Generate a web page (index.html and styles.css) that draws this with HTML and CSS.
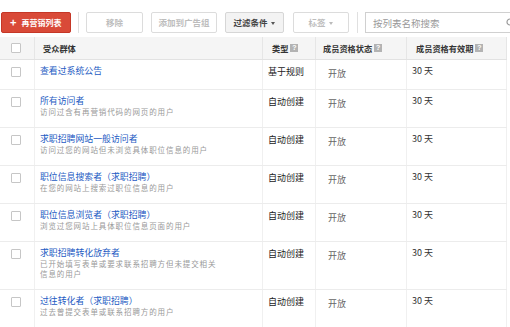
FILE: index.html
```html
<!DOCTYPE html>
<html lang="zh-CN">
<head>
<meta charset="utf-8">
<title>再营销列表</title>
<link rel="stylesheet" href="styles.css">
</head>
<body>
<div class="page">
  <div class="toolbar">
    <button class="btn btn-red"><span class="plus">+</span>再营销列表</button>
    <span class="sep"></span>
    <button class="btn btn-disabled w57">移除</button>
    <button class="btn btn-disabled w66">添加到广告组</button>
    <button class="btn btn-gray w59">过滤条件 <span class="caret"></span></button>
    <button class="btn btn-disabled w56">标签 <span class="caret light"></span></button>
    <span class="sep"></span>
    <div class="search">
      <span class="placeholder">按列表名称搜索</span>
      <svg class="search-icon" width="10" height="10" viewBox="0 0 10 10"><circle cx="4" cy="4" r="3" fill="none" stroke="#999" stroke-width="1.2"/><line x1="6.2" y1="6.2" x2="9" y2="9" stroke="#999" stroke-width="1.3"/></svg>
    </div>
  </div>

  <div class="grid">
    <div class="row head">
      <div class="cell c-check"><span class="cb"></span></div>
      <div class="cell h-name">受众群体</div>
      <div class="cell h-type">类型<span class="help">?</span></div>
      <div class="cell h-status">成员资格状态<span class="help">?</span></div>
      <div class="cell h-valid">成员资格有效期<span class="help">?</span></div>
    </div>

    <div class="row">
      <div class="cell c-check"><span class="cb"></span></div>
      <div class="cell c-name"><a class="name">查看过系统公告</a></div>
      <div class="cell c-type">基于规则</div>
      <div class="cell c-status">开放</div>
      <div class="cell c-valid">30 天</div>
    </div>

    <div class="row">
      <div class="cell c-check"><span class="cb"></span></div>
      <div class="cell c-name"><a class="name">所有访问者</a><div class="desc">访问过含有再营销代码的网页的用户</div></div>
      <div class="cell c-type">自动创建</div>
      <div class="cell c-status">开放</div>
      <div class="cell c-valid">30 天</div>
    </div>

    <div class="row">
      <div class="cell c-check"><span class="cb"></span></div>
      <div class="cell c-name"><a class="name">求职招聘网站一般访问者</a><div class="desc">访问过您的网站但未浏览具体职位信息的用户</div></div>
      <div class="cell c-type">自动创建</div>
      <div class="cell c-status">开放</div>
      <div class="cell c-valid">30 天</div>
    </div>

    <div class="row">
      <div class="cell c-check"><span class="cb"></span></div>
      <div class="cell c-name"><a class="name">职位信息搜索者（求职招聘）</a><div class="desc">在您的网站上搜索过职位信息的用户</div></div>
      <div class="cell c-type">自动创建</div>
      <div class="cell c-status">开放</div>
      <div class="cell c-valid">30 天</div>
    </div>

    <div class="row">
      <div class="cell c-check"><span class="cb"></span></div>
      <div class="cell c-name"><a class="name">职位信息浏览者（求职招聘）</a><div class="desc">浏览过您网站上具体职位信息页面的用户</div></div>
      <div class="cell c-type">自动创建</div>
      <div class="cell c-status">开放</div>
      <div class="cell c-valid">30 天</div>
    </div>

    <div class="row">
      <div class="cell c-check"><span class="cb"></span></div>
      <div class="cell c-name"><a class="name">求职招聘转化放弃者</a><div class="desc">已开始填写表单或要求联系招聘方但未提交相关信息的用户</div></div>
      <div class="cell c-type">自动创建</div>
      <div class="cell c-status">开放</div>
      <div class="cell c-valid">30 天</div>
    </div>

    <div class="row">
      <div class="cell c-check"><span class="cb"></span></div>
      <div class="cell c-name"><a class="name">过往转化者（求职招聘）</a><div class="desc">过去曾提交表单或联系招聘方的用户</div></div>
      <div class="cell c-type">自动创建</div>
      <div class="cell c-status">开放</div>
      <div class="cell c-valid">30 天</div>
    </div>
  </div>
</div>
</body>
</html>
```

FILE: styles.css
```css
* { box-sizing: border-box; }
html, body { margin: 0; padding: 0; background: #fff; }
body {
  width: 510px;
  height: 327px;
  overflow: hidden;
  font-family: "Noto Sans CJK SC", "Liberation Sans", sans-serif;
  color: #222;
}
.page { width: 510px; }

.toolbar {
  display: flex;
  align-items: center;
  height: 33px;
  padding: 12px 0 0 1px;
  white-space: nowrap;
  overflow: hidden;
}
.btn {
  height: 21px;
  padding: 0;
  margin: 0 8px 0 0;
  font-family: inherit;
  font-size: 8.5px;
  line-height: 19px;
  border: 1px solid #dcdcdc;
  border-radius: 2px;
  background: #fff;
  flex-shrink: 0;
  text-align: center;
}
.btn-red {
  width: 70px;
  margin-right: 7px;
  background: #d94a38;
  border-color: #c53727;
  color: #fff;
  font-weight: bold;
  font-size: 8px;
  display: flex;
  align-items: center;
  padding-left: 8px;
}
.plus { font-size: 11px; font-weight: bold; margin-right: 5px; line-height: 1; }
.btn-disabled { color: #bdbdbd; font-weight: bold; }
.btn-gray { background: #f3f3f3; color: #444; font-weight: bold; border-color: #d6d6d6; margin-right: 9px; }
.w57 { width: 57px; }
.w66 { width: 66px; margin-right: 8px; }
.w59 { width: 59px; }
.w56 { width: 56px; }
.caret {
  display: inline-block;
  width: 0; height: 0;
  border-left: 2.5px solid transparent;
  border-right: 2.5px solid transparent;
  border-top: 3px solid #555;
  vertical-align: middle;
  margin-left: 2px;
}
.caret.light { border-top-color: #bbb; }
.sep {
  width: 1px;
  height: 21px;
  background: #e0e0e0;
  margin-right: 7px;
  flex-shrink: 0;
}
.search {
  flex-shrink: 0;
  width: 165px;
  height: 21px;
  border: 1px solid #d0d0d0;
  display: flex;
  align-items: center;
  padding-left: 7px;
}
.placeholder { font-size: 9.5px; color: #999; }
.search-icon { margin-left: 66px; }

.grid {
  margin-top: 4px;
  width: 507px;
}
.row {
  display: grid;
  grid-template-columns: 35px 228px 53px 91px 100px;
  border-bottom: 1px solid #ececec;
}
.cell {
  border-right: 1px solid #f0f0f0;
}
.head {
  height: 23px;
  background: #f5f5f5;
  border-bottom: 1px solid #e2e2e2;
  font-weight: bold;
  font-size: 8.2px;
  color: #333;
}
.head .cell {
  display: flex;
  align-items: center;
  border-right-color: #e6e6e6;
}
.h-name { padding-left: 8px; }
.h-type { padding-left: 9px; }
.h-status { padding-left: 7px; }
.h-valid { padding-left: 9px; }
.help {
  display: inline-block;
  width: 8px;
  height: 8px;
  margin-left: 2px;
  background: #b3b3b3;
  color: #fff;
  font-size: 7px;
  line-height: 8px;
  text-align: center;
  font-family: "Liberation Sans", sans-serif;
}
.c-check { padding: 7px 0 0 11px; }
.head .c-check { padding: 0 0 0 11px; }
.cb {
  display: block;
  width: 10px;
  height: 10px;
  border: 1px solid #c6c6c6;
  background: #fff;
  border-radius: 1px;
}
.c-name { padding: 5px 0 10px 5px; }
.name {
  display: block;
  font-size: 8.9px;
  line-height: 12px;
  color: #1d5bc3;
}
.desc {
  max-width: 184px;
  font-size: 7.5px;
  line-height: 10px;
  letter-spacing: 0.9px;
  color: #999;
}
.c-type { padding: 6px 0 0 5px; font-size: 9px; line-height: 12px; color: #222; }
.c-status { padding: 8px 0 9px 12px; font-size: 9px; line-height: 12px; color: #666; }
.c-valid { padding: 5px 0 0 5px; font-size: 9px; line-height: 12px; color: #333; }
```
